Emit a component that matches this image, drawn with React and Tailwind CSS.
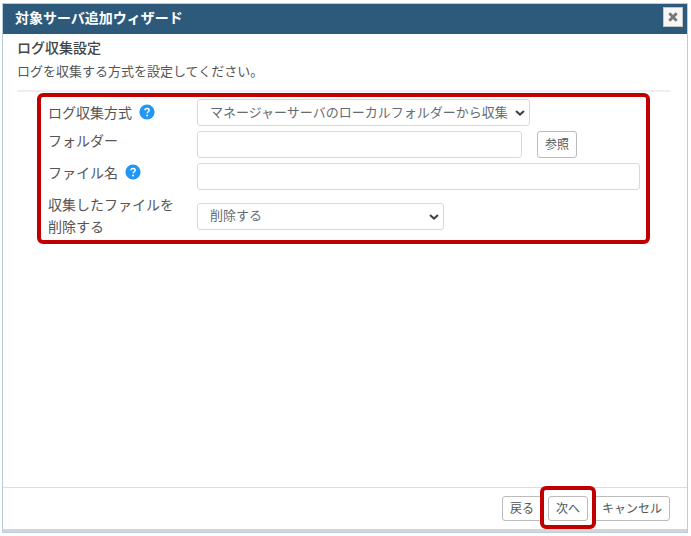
import { useState } from "react";

function HelpIcon() {
  return (
    <button type="button" aria-label="ヘルプ" className="flex shrink-0">
      <svg viewBox="0 0 16 16" className="w-4 h-4">
        <circle cx="8" cy="8" r="7.6" fill="#2196f3" />
        <path
          d="M5.9 6.3C6 5.1 6.9 4.4 8.1 4.4c1.2 0 2.1.7 2.1 1.8 0 1.5-2 1.6-2 3.1"
          fill="none"
          stroke="#fff"
          strokeWidth="1.5"
        />
        <circle cx="8.1" cy="11.5" r="1" fill="#fff" />
      </svg>
    </button>
  );
}

function Row({ id, label, help, center, children }) {
  return (
    <div className={`flex ${center ? "items-center" : "items-start"}`}>
      <div className="w-[149px] shrink-0 -mt-[2px] pr-5 flex items-center gap-[7px]">
        <label htmlFor={id} className="text-[14px] leading-[22px] text-[#555]">
          {label}
        </label>
        {help && <HelpIcon />}
      </div>
      {children}
    </div>
  );
}

function Input({ id, value, onChange, className = "" }) {
  return (
    <input
      id={id}
      type="text"
      value={value}
      onChange={(e) => onChange(e.target.value)}
      className={`h-[27px] px-3 min-w-0 bg-white border border-[#d5dae0] rounded-[3px] text-[13px] text-[#555] outline-none focus:border-[#2196f3] ${className}`}
    />
  );
}

function Select({ id, value, onChange, options, className = "" }) {
  return (
    <div className={`relative ${className}`}>
      <select
        id={id}
        value={value}
        onChange={(e) => onChange(e.target.value)}
        className="block w-full h-[27px] pl-3 pr-5 pb-[2px] appearance-none bg-white border border-[#d5dae0] rounded-[3px] text-[13px] text-[#666b72] outline-none focus:border-[#2196f3]"
      >
        {options.map((opt) => (
          <option key={opt} value={opt}>
            {opt}
          </option>
        ))}
      </select>
      <svg
        viewBox="0 0 10 6"
        className="absolute right-[5px] top-[11px] w-[10px] h-[6px] pointer-events-none"
      >
        <path d="M1 1l4 3.6L9 1" fill="none" stroke="#3d434a" strokeWidth="2" />
      </svg>
    </div>
  );
}

function Button({ children, className = "" }) {
  return (
    <button
      type="button"
      className={`px-[7px] pb-[2px] bg-white border border-[#bbb] rounded-[3px] text-[12px] leading-4 text-[#555] whitespace-nowrap hover:bg-gray-50 ${className}`}
    >
      {children}
    </button>
  );
}

const METHODS = ["マネージャーサーバのローカルフォルダーから収集"];
const DELETE_OPTIONS = ["削除する", "削除しない"];

export default function App() {
  const [method, setMethod] = useState(METHODS[0]);
  const [folder, setFolder] = useState("");
  const [fileName, setFileName] = useState("");
  const [remove, setRemove] = useState(DELETE_OPTIONS[0]);

  return (
    <div className="h-screen flex flex-col pt-[3px] pb-[3px] pl-[2px] pr-[3px] bg-white font-['Noto_Sans_CJK_JP',sans-serif]">
      <div
        role="dialog"
        aria-labelledby="wizard-title"
        className="flex-1 flex flex-col border border-[#b7cde3]"
      >
        <header className="h-[30px] shrink-0 flex items-center justify-between pl-3 pr-1 bg-[#2d5a7b]">
          <h1 id="wizard-title" className="pb-1 text-[14px] leading-5 font-bold text-white">
            対象サーバ追加ウィザード
          </h1>
          <button
            type="button"
            aria-label="閉じる"
            className="w-5 h-5 mb-1 flex items-center justify-center bg-[#f6f6f6] border border-[#c5c5c5]"
          >
            <svg viewBox="0 0 10 10" className="w-[10px] h-[10px]">
              <path d="M1.3 1.3l7.4 7.4M8.7 1.3L1.3 8.7" stroke="#777" strokeWidth="2.8" />
            </svg>
          </button>
        </header>

        <main className="flex-1 pl-[14px] pr-[17px] pt-[2px]">
          <h2 className="text-[14px] leading-[22px] font-medium text-[#444]">ログ収集設定</h2>
          <p className="mt-[2px] pb-2 text-[13px] leading-[22px] text-[#555] border-b-2 border-[#eceef0]">
            ログを収集する方式を設定してください。
          </p>

          <form className="mx-5 mt-px pl-[7px] pr-[6px] pt-[2px] pb-[3px] flex flex-col gap-[5px] border-4 border-[#c00000] rounded-md">
            <Row id="method" label="ログ収集方式" help center>
              <Select
                id="method"
                value={method}
                onChange={setMethod}
                options={METHODS}
                className="w-[333px]"
              />
            </Row>
            <Row id="folder" label="フォルダー">
              <Input id="folder" value={folder} onChange={setFolder} className="w-[325px]" />
              <Button className="h-[27px] ml-[15px]">参照</Button>
            </Row>
            <Row id="file" label="ファイル名" help>
              <Input id="file" value={fileName} onChange={setFileName} className="flex-1" />
            </Row>
            <Row id="remove" label="収集したファイルを削除する" center>
              <Select
                id="remove"
                value={remove}
                onChange={setRemove}
                options={DELETE_OPTIONS}
                className="w-[247px]"
              />
            </Row>
          </form>
        </main>

        <footer className="flex justify-end gap-[6px] pt-2 pb-2 pr-[17px] border-t border-[#ddd]">
          <Button className="h-[25px]">戻る</Button>
          <div className="relative flex">
            <Button className="h-[25px]">次へ</Button>
            <div className="absolute -inset-x-2 -top-[10px] -bottom-2 border-4 border-[#c00000] rounded-md pointer-events-none" />
          </div>
          <Button className="h-[25px]">キャンセル</Button>
        </footer>
        <div className="h-[3px] bg-[#d5d5d5]" />
      </div>
    </div>
  );
}
